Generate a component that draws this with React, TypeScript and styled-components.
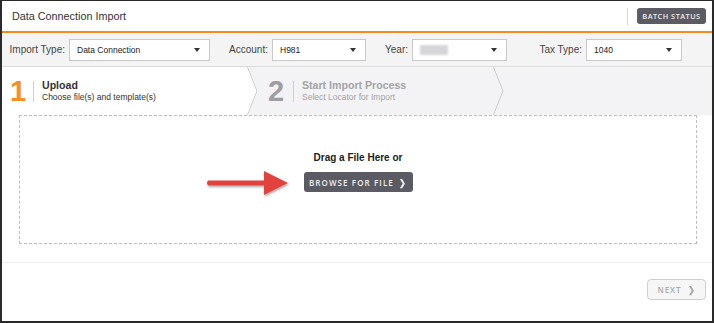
import React from "react";
import styled, { createGlobalStyle } from "styled-components";

const Global = createGlobalStyle`
  html, body { margin: 0; padding: 0; background: #fff; }
  body { font-family: "Liberation Sans", Arial, sans-serif; color: #333; }
  * { box-sizing: border-box; }
`;

const Frame = styled.div`
  width: 714px;
  height: 323px;
  border: 2px solid #2a2a2a;
  border-top-width: 1px;
  display: flex;
  flex-direction: column;
  background: #fff;
  overflow: hidden;
`;

const Header = styled.header`
  height: 32px;
  flex: none;
  display: flex;
  align-items: center;
  justify-content: space-between;
  padding: 0 6px 0 10px;
  border-bottom: 2px solid #f58a1f;
`;

const Title = styled.h1`
  margin: 0;
  font-size: 10.8px;
  font-weight: normal;
  color: #333;
`;

const HeaderRight = styled.div`
  display: flex;
  align-items: center;
  gap: 9px;
`;

const VDivider = styled.span`
  width: 1px;
  height: 17px;
  background: #d8d8d8;
`;

const DarkButton = styled.button<{ $w: number; $h: number; $size: number; $ls: number }>`
  width: ${(p) => p.$w}px;
  height: ${(p) => p.$h}px;
  border: none;
  border-radius: 3px;
  background: #5b5b63;
  color: #eee;
  font-family: "Open Sans", Arial, sans-serif;
  font-weight: 600;
  font-size: ${(p) => p.$size}px;
  letter-spacing: ${(p) => p.$ls}px;
  padding: 0;
  display: flex;
  align-items: center;
  justify-content: center;
  gap: 5px;
  white-space: nowrap;
  cursor: pointer;
`;

const FilterBar = styled.div`
  height: 34px;
  flex: none;
  display: flex;
  align-items: center;
  padding-left: 5px;
  background: #f4f4f5;
  border-bottom: 1px solid #dcdcdc;
`;

const Field = styled.div`
  display: flex;
  align-items: center;
  gap: 4px;
`;

const Label = styled.label<{ $w: number }>`
  width: ${(p) => p.$w}px;
  text-align: right;
  font-size: 10px;
  color: #444;
  white-space: nowrap;
`;

const SelectBox = styled.div<{ $w: number }>`
  width: ${(p) => p.$w}px;
  height: 22px;
  background: #fff;
  border: 1px solid #c9c9c9;
  display: flex;
  align-items: center;
  justify-content: space-between;
  padding: 0 9px 0 7px;
  font-size: 8.5px;
  color: #222;
`;

const Caret = styled.span`
  width: 0;
  height: 0;
  border-left: 3.5px solid transparent;
  border-right: 3.5px solid transparent;
  border-top: 4px solid #333;
`;

const Blurred = styled.span`
  width: 28px;
  height: 10px;
  background: #d6d6d8;
  filter: blur(1.2px);
`;

const StepsBar = styled.div`
  height: 48px;
  flex: none;
  display: flex;
  background: #f3f3f5;
`;

const Step = styled.div<{ $w: number; $bg: string; $pad: number }>`
  position: relative;
  width: ${(p) => p.$w}px;
  height: 100%;
  background: ${(p) => p.$bg};
  clip-path: polygon(0 0, calc(100% - 10px) 0, 100% 50%, calc(100% - 10px) 100%, 0 100%);
  display: flex;
  align-items: center;
  padding-left: ${(p) => p.$pad}px;
`;

const Chevron = styled.svg`
  position: absolute;
  right: 0;
  top: 0;
  width: 11px;
  height: 100%;
`;

const StepNum = styled.span<{ $active: boolean }>`
  font-size: 29px;
  font-weight: bold;
  font-family: "Liberation Sans", Arial, sans-serif;
  color: ${(p) => (p.$active ? "#f7901e" : "#9d9da2")};
  width: ${(p) => (p.$active ? 22 : 24)}px;
  text-align: left;
  line-height: 1;
`;

const StepDivider = styled.span`
  width: 1px;
  height: 21px;
  background: #cfcfd2;
  margin: 0 8px 0 1px;
`;

const StepText = styled.div<{ $active: boolean }>`
  display: flex;
  flex-direction: column;
  gap: 1px;
  color: ${(p) => (p.$active ? "#333" : "#a3a3a7")};
  margin-top: -2px;
`;

const StepTitle = styled.span`
  font-size: 10.6px;
  font-weight: bold;
`;

const StepSub = styled.span`
  font-size: 8.5px;
`;

const Main = styled.main`
  padding: 0 15px 0 17px;
  flex: none;
`;

const DropZone = styled.div`
  position: relative;
  height: 129px;
  border: 1px dashed #bdbdbd;
  display: flex;
  flex-direction: column;
  align-items: center;
  padding-top: 36px;
  gap: 9px;
`;

const DropText = styled.span`
  font-size: 10px;
  font-weight: bold;
  color: #222;
`;

const ArrowSvg = styled.svg`
  position: absolute;
  left: 186px;
  top: 53px;
  width: 84px;
  height: 28px;
  overflow: visible;
`;

const Footer = styled.footer`
  margin-top: 18px;
  flex: 1;
  border-top: 1px solid #f0f0f0;
  display: flex;
  align-items: center;
  justify-content: flex-end;
  padding: 0 6px 6px 0;
`;

const NextButton = styled.button`
  width: 59px;
  height: 21px;
  border: 1px solid #cfcfd2;
  border-radius: 4px;
  background: #f6f6f7;
  color: #a9a9ad;
  font-family: "Open Sans", Arial, sans-serif;
  font-size: 8px;
  font-weight: 600;
  letter-spacing: 1px;
  display: flex;
  align-items: center;
  justify-content: center;
  gap: 6px;
  padding: 0;
`;

const Chev = styled.span`
  font-size: 8px;
  transform: scaleY(1.1);
`;

function StepChevron() {
  return (
    <Chevron viewBox="0 0 11 48" preserveAspectRatio="none">
      <polyline points="0.5,0 10,24 0.5,48" fill="none" stroke="#c8c8cc" strokeWidth="1" />
    </Chevron>
  );
}

export default function App() {
  return (
    <>
      <Global />
      <Frame>
        <Header>
          <Title>Data Connection Import</Title>
          <HeaderRight>
            <VDivider />
            <DarkButton $w={69} $h={16} $size={7.3} $ls={0.5}>BATCH STATUS</DarkButton>
          </HeaderRight>
        </Header>
        <FilterBar>
          <Field>
            <Label $w={58}>Import Type:</Label>
            <SelectBox $w={141}>
              Data Connection <Caret />
            </SelectBox>
          </Field>
          <Field>
            <Label $w={58}>Account:</Label>
            <SelectBox $w={94}>
              H981 <Caret />
            </SelectBox>
          </Field>
          <Field>
            <Label $w={42}>Year:</Label>
            <SelectBox $w={95}>
              <Blurred /> <Caret />
            </SelectBox>
          </Field>
          <Field>
            <Label $w={75}>Tax Type:</Label>
            <SelectBox $w={96}>
              1040 <Caret />
            </SelectBox>
          </Field>
        </FilterBar>
        <StepsBar>
          <Step $w={256} $bg="#fff" $pad={8}>
            <StepNum $active>1</StepNum>
            <StepDivider />
            <StepText $active>
              <StepTitle>Upload</StepTitle>
              <StepSub>Choose file(s) and template(s)</StepSub>
            </StepText>
            <StepChevron />
          </Step>
          <Step $w={246} $bg="#f3f3f5" $pad={10}>
            <StepNum $active={false}>2</StepNum>
            <StepDivider />
            <StepText $active={false}>
              <StepTitle>Start Import Process</StepTitle>
              <StepSub>Select Locator for Import</StepSub>
            </StepText>
            <StepChevron />
          </Step>
        </StepsBar>
        <Main>
          <DropZone>
            <DropText>Drag a File Here or</DropText>
            <DarkButton $w={109} $h={20} $size={8} $ls={1.1}>
              BROWSE FOR FILE <Chev>❯</Chev>
            </DarkButton>
            <ArrowSvg viewBox="0 0 84 28">
              <defs>
                <filter id="sh" x="-20%" y="-40%" width="140%" height="180%">
                  <feDropShadow dx="1" dy="1.5" stdDeviation="1" floodColor="#000" floodOpacity="0.35" />
                </filter>
              </defs>
              <path
                d="M2 11.5 L58 11.5 L58 2 L82 14 L58 26 L58 16.5 L2 16.5 Q0 14 2 11.5 Z"
                fill="#e2433c"
                filter="url(#sh)"
              />
            </ArrowSvg>
          </DropZone>
        </Main>
        <Footer>
          <NextButton>
            NEXT <Chev>❯</Chev>
          </NextButton>
        </Footer>
      </Frame>
    </>
  );
}
